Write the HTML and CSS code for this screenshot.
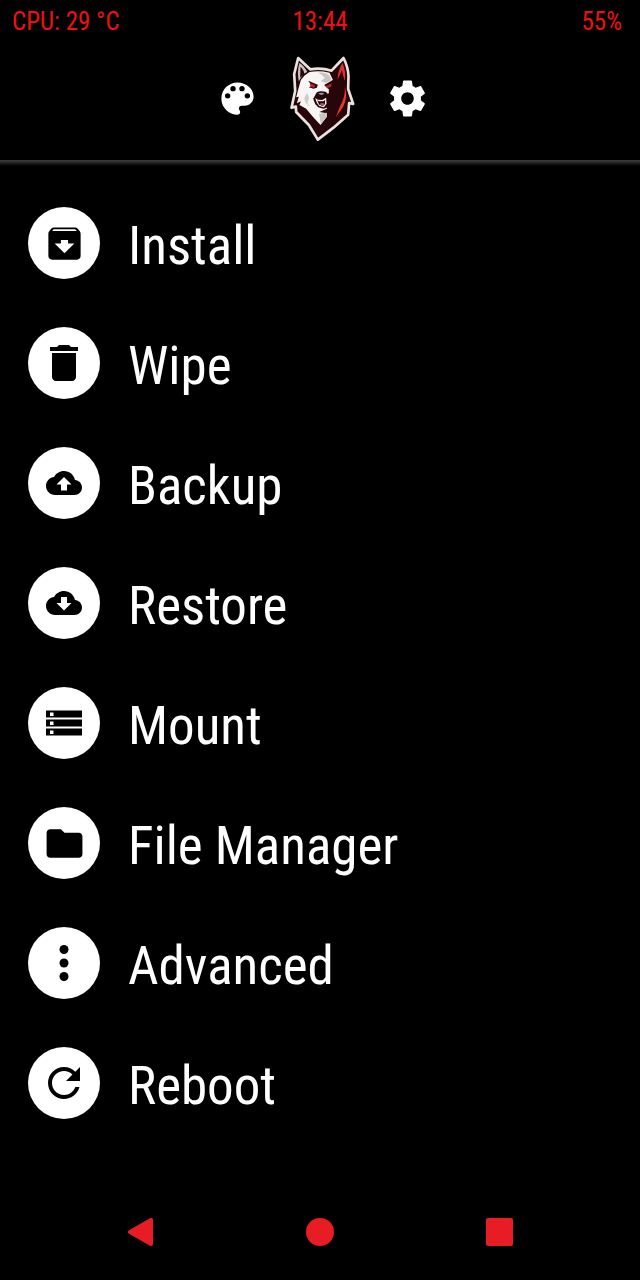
FILE: index.html
```html
<!DOCTYPE html>
<html lang="en">

<head>
    <meta charset="UTF-8">
    <meta name="viewport" content="width=device-width, initial-scale=1.0">
    <title>Recovery</title>
    <link rel="stylesheet" href="styles.css">
</head>

<body>
    <!-- Status bar -->
    <div class="status">
        <span class="cpu">CPU: 29 °C</span>
        <span class="clock">13:44</span>
        <span class="battery">55%</span>
    </div>

    <header class="header">
        <button class="icon-btn" aria-label="Theme">
            <svg class="icon" viewBox="0 0 24 24">
                <path d="M12 3a9 9 0 0 0 0 18c.83 0 1.5-.67 1.5-1.5 0-.39-.15-.74-.39-1.01-.23-.26-.38-.61-.38-.99 0-.83.67-1.5 1.5-1.5H16c2.76 0 5-2.24 5-5 0-4.42-4.03-8-9-8zm-5.5 9a1.5 1.5 0 1 1 0-3 1.5 1.5 0 0 1 0 3zm3-4a1.5 1.5 0 1 1 0-3 1.5 1.5 0 0 1 0 3zm5 0a1.5 1.5 0 1 1 0-3 1.5 1.5 0 0 1 0 3zm3 4a1.5 1.5 0 1 1 0-3 1.5 1.5 0 0 1 0 3z"/>
            </svg>
        </button>
        <!-- Wolf logo -->
        <svg class="logo" viewBox="62 32 194 258" role="img" aria-label="Wolf">
            <path d="M86 38L122 72Q155 66 186 76L222 38Q236 65 237 92L236 131L251 176L239 173L236 208L192 247L145 283L118 239L80 200L79 184L66 187L77 137L74 86Z" fill="#270609" stroke="#e9e3e0" stroke-width="8" stroke-linejoin="round"/>
            <!-- ears -->
            <path d="M90 52Q108 66 113 80L101 86L88 108Q82 78 90 52Z" fill="#c9c5c3"/>
            <path d="M93 64Q105 76 104 86L92 97Z" fill="#270609"/>
            <path d="M219 53Q230 78 226 106L216 80L204 103Q205 76 219 53Z" fill="#e0302f"/>
            <path d="M217 74L222 96L212 108L206 103Z" fill="#270609"/>
            <!-- face -->
            <path d="M120 80Q150 75 180 82L190 103L178 124L178 150L172 190L150 200L172 204L172 214L153 239L130 214L110 190L90 179L94 168L82 174L88 154L80 156L88 126L94 104L106 90Z" fill="#f8f6f5"/>
            <path d="M145 82Q171 79 182 94L186 105L169 113L154 108L166 98Q160 88 145 82Z" fill="#c8c5c4"/>
            <path d="M149 205L172 202L172 214L154 237Z" fill="#c8c5c4"/>
            <path d="M113 143L119 158L114 172L122 184L108 172L104 158Z" fill="#d0cccb"/>
            <!-- eyes -->
            <path d="M116 106L145 118L142 127L132 130L118 126L127 121Z" fill="#270609"/>
            <path d="M164 119L190 104L192 128L176 131Z" fill="#270609"/>
            <path d="M121 114L138 120L134 127L123 124Z" fill="#c21a28"/>
            <path d="M169 122L187 114L185 124L174 128Z" fill="#c21a28"/>
            <!-- nose and mouth -->
            <path d="M139 146Q142 137 156 138Q170 138 174 145L184 142L176 186L162 190L146 186L137 176L131 160Z" fill="#270609"/>
            <path d="M137 158L145 163L158 164L170 157L171 175L163 186L149 182L142 172Z" fill="#f8f6f5"/>
            <path d="M143 164L148 168L162 168L167 163L166 177L160 182L149 178Z" fill="#160507"/>
            <path d="M150 177Q157 170 165 176L160 182Z" fill="#b95555"/>
            <path d="M146 145Q155 140 165 145L156 149Z" fill="#a19a99"/>
            <!-- mane -->
            <path d="M226 125Q236 154 221 184L199 216L211 184Q228 155 226 125Z" fill="#ee3435"/>
        </svg>
        <button class="icon-btn" aria-label="Settings">
            <svg class="icon" viewBox="0 0 24 24">
                <path d="M19.43 12.98c.04-.32.07-.64.07-.98s-.03-.66-.07-.98l2.11-1.65c.19-.15.24-.42.12-.64l-2-3.46c-.12-.22-.39-.3-.61-.22l-2.49 1c-.52-.4-1.08-.73-1.69-.98l-.38-2.65C14.46 2.18 14.25 2 14 2h-4c-.25 0-.46.18-.49.42l-.38 2.65c-.61.25-1.17.59-1.69.98l-2.49-1c-.23-.09-.49 0-.61.22l-2 3.46c-.13.22-.07.49.12.64l2.11 1.65c-.04.32-.07.65-.07.98s.03.66.07.98l-2.11 1.65c-.19.15-.24.42-.12.64l2 3.46c.12.22.39.3.61.22l2.49-1c.52.4 1.08.73 1.69.98l.38 2.65c.03.24.24.42.49.42h4c.25 0 .46-.18.49-.42l.38-2.65c.61-.25 1.17-.59 1.69-.98l2.49 1c.23.09.49 0 .61-.22l2-3.46c.12-.22.07-.49-.12-.64l-2.11-1.65zM12 15.5c-1.93 0-3.5-1.57-3.5-3.5s1.57-3.5 3.5-3.5 3.5 1.57 3.5 3.5-1.57 3.5-3.5 3.5z"/>
            </svg>
        </button>
    </header>

    <!-- Main menu -->
    <main class="menu">
        <button class="item">
            <span class="circle"><svg class="icon" viewBox="0 0 24 24"><path d="M20.54 5.23l-1.39-1.68C18.88 3.21 18.47 3 18 3H6c-.47 0-.88.21-1.16.55L3.46 5.23C3.17 5.57 3 6.02 3 6.5V19c0 1.1.9 2 2 2h14c1.1 0 2-.9 2-2V6.5c0-.48-.17-.93-.46-1.27zM12 17.5L6.5 12H10v-2h4v2h3.5L12 17.5zM5.12 5l.81-1h12l.94 1H5.12z"/></svg></span>
            <span class="label">Install</span>
        </button>
        <button class="item">
            <span class="circle"><svg class="icon large" viewBox="0 0 24 24"><path d="M6 19c0 1.1.9 2 2 2h8c1.1 0 2-.9 2-2V7H6v12zM19 4h-3.500l-1-1h-5l-1 1H5v2h14V4z"/></svg></span>
            <span class="label">Wipe</span>
        </button>
        <button class="item">
            <span class="circle"><svg class="icon small" viewBox="0 0 24 24"><path d="M19.35 10.04C18.67 6.59 15.64 4 12 4 9.11 4 6.6 5.64 5.35 8.04 2.34 8.36 0 10.91 0 14c0 3.31 2.69 6 6 6h13c2.76 0 5-2.24 5-5 0-2.64-2.05-4.78-4.65-4.96zM14 13v4h-4v-4H7l5-5 5 5h-3z"/></svg></span>
            <span class="label">Backup</span>
        </button>
        <button class="item">
            <span class="circle"><svg class="icon small" viewBox="0 0 24 24"><path d="M19.35 10.04C18.67 6.59 15.64 4 12 4 9.11 4 6.6 5.64 5.35 8.04 2.34 8.36 0 10.91 0 14c0 3.31 2.69 6 6 6h13c2.76 0 5-2.24 5-5 0-2.64-2.05-4.78-4.65-4.96zM17 12l-5 5-5-5h3V8h4v4h3z"/></svg></span>
            <span class="label">Restore</span>
        </button>
        <button class="item">
            <span class="circle"><svg class="icon small" viewBox="0 0 36 36"><path fill-rule="evenodd" d="M0 5.500h36v7H0zM4 7.500v3.500h3.500V7.500zM0 14.500h36v7H0zM4 16.500v3.500h3.500v-3.500zM0 23.500h36v7H0zM4 25.500v3.500h3.500v-3.500z"/></svg></span>
            <span class="label">Mount</span>
        </button>
        <button class="item">
            <span class="circle"><svg class="icon" viewBox="0 0 24 24"><path d="M10 4H4c-1.100 0-1.990.9-1.990 2L2 18c0 1.100.9 2 2 2h16c1.100 0 2-.9 2-2V8c0-1.100-.9-2-2-2h-8l-2-2z"/></svg></span>
            <span class="label">File Manager</span>
        </button>
        <button class="item">
            <span class="circle"><svg class="icon small" viewBox="0 0 36 36"><circle cx="18" cy="4.500" r="4.500"/><circle cx="18" cy="18" r="4.500"/><circle cx="18" cy="31.500" r="4.500"/></svg></span>
            <span class="label">Advanced</span>
        </button>
        <button class="item">
            <span class="circle"><svg class="icon large" viewBox="0 0 24 24"><path d="M17.65 6.35C16.2 4.9 14.21 4 12 4c-4.42 0-7.99 3.58-7.99 8s3.57 8 7.99 8c3.73 0 6.84-2.55 7.73-6h-2.08c-.82 2.33-3.04 4-5.65 4-3.31 0-6-2.69-6-6s2.69-6 6-6c1.66 0 3.14.69 4.22 1.78L13 11h7V4l-2.35 2.35z"/></svg></span>
            <span class="label">Reboot</span>
        </button>
    </main>

    <!-- Navigation bar -->
    <nav class="navbar">
        <button class="nav-btn" aria-label="Back">
            <svg viewBox="0 0 28 28"><path d="M4 14L25 2V26Z" stroke="#e81c25" stroke-width="4" stroke-linejoin="round"/></svg>
        </button>
        <button class="nav-btn" aria-label="Home">
            <svg viewBox="0 0 28 28"><circle cx="14" cy="14" r="14"/></svg>
        </button>
        <button class="nav-btn" aria-label="Recent">
            <svg viewBox="0 0 28 28"><rect width="27" height="28" rx="2"/></svg>
        </button>
    </nav>
</body>

</html>
```
FILE: styles.css
```css
* {
    box-sizing: border-box;
}

body {
    font-family: 'Roboto Condensed', 'Roboto', sans-serif;
    background-color: #000;
    color: #fff;
    margin: 0;
    min-height: 100vh;
    display: flex;
    flex-direction: column;
}

button {
    background: none;
    border: none;
    padding: 0;
    color: inherit;
    font-family: inherit;
    cursor: pointer;
}

svg {
    display: block;
}

/* Status bar */
.status {
    display: grid;
    grid-template-columns: 1fr auto 1fr;
    align-items: center;
    height: 44px;
    padding: 0 12px;
    color: #f01010;
    font-size: 25px;
    line-height: 44px;
}

.battery {
    padding-right: 6px;
    text-align: right;
}

/* Header */
.header {
    display: flex;
    justify-content: center;
    align-items: center;
    gap: 31px;
    height: 122px;
    padding: 0 0 13px 4px;
    background: linear-gradient(#404040, #000) bottom / 100% 6px no-repeat;
}

.icon {
    width: 43px;
    height: 43px;
    fill: currentColor;
}

.icon.small {
    width: 36px;
    height: 36px;
}

.icon.large {
    width: 48px;
    height: 48px;
}

.logo {
    width: 65px;
    height: 86px;
}

/* Menu */
.menu {
    display: flex;
    flex-direction: column;
    flex: 1;
    padding-top: 17px;
}

.item {
    display: flex;
    align-items: center;
    gap: 28px;
    height: 120px;
    padding: 0 28px;
    font-size: 53px;
    text-align: left;
}

.circle {
    display: flex;
    justify-content: center;
    align-items: center;
    width: 72px;
    height: 72px;
    border-radius: 50%;
    background-color: #fff;
    color: #000;
}

.label {
    padding-top: 5px;
}

/* Navigation bar */
.navbar {
    display: flex;
    justify-content: center;
    gap: 152px;
    padding: 34px 0;
}

.nav-btn svg {
    width: 28px;
    height: 28px;
    fill: #e81c25;
}
```
